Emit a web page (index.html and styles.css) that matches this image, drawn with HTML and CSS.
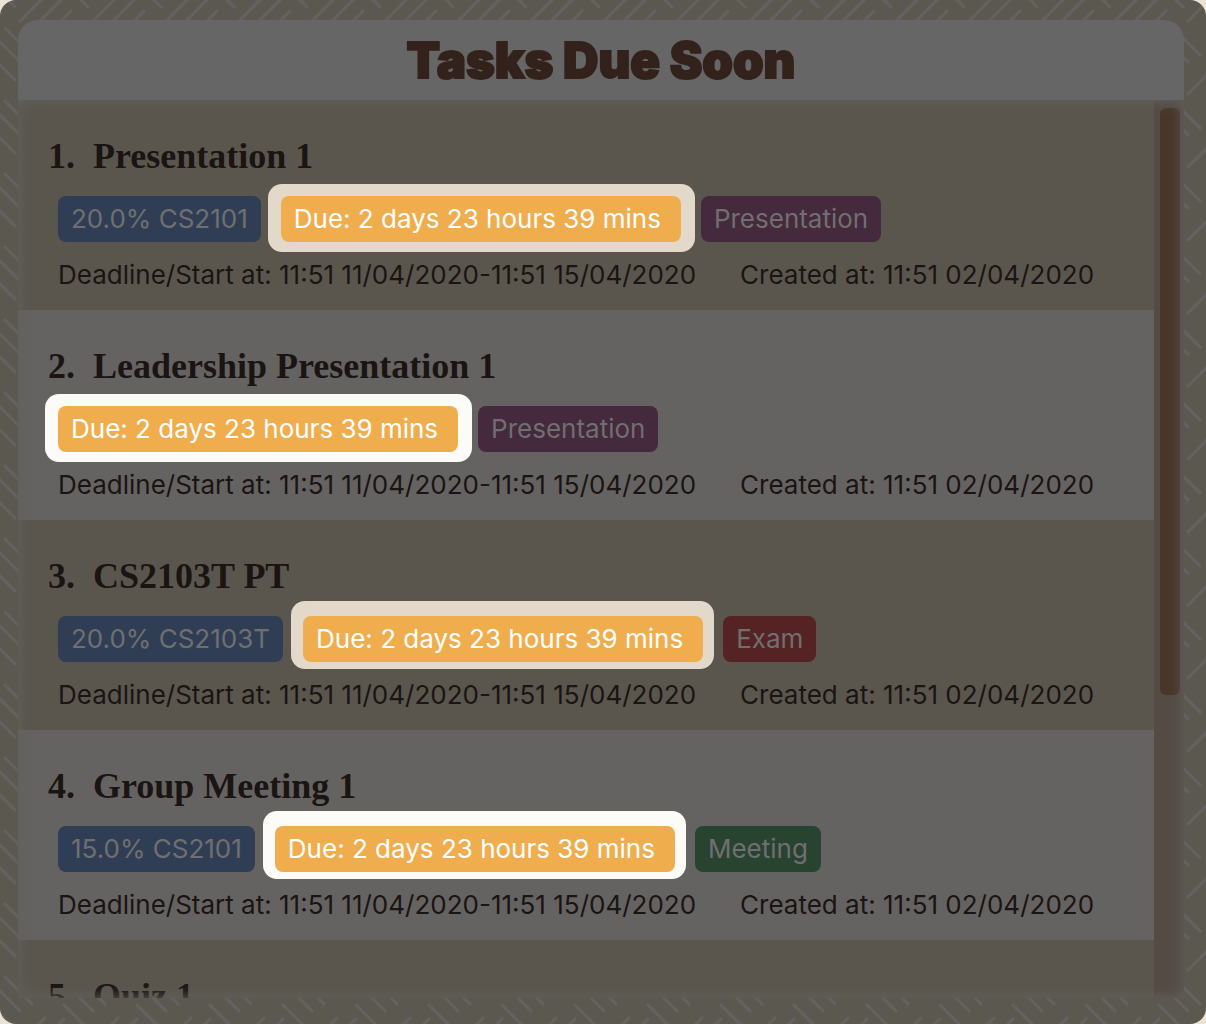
FILE: index.html
```html
<!DOCTYPE html>
<html lang="en">
<head>
<meta charset="utf-8">
<title>Tasks Due Soon</title>
<link rel="stylesheet" href="styles.css">
</head>
<body>
<main class="frame">
  <section class="panel">
    <h1 class="panel-title">Tasks Due Soon</h1>
    <div class="viewport">
      <ol class="tasks">
        <li class="task">
          <h2 class="name"><span>1.</span><span>Presentation 1</span></h2>
          <div class="tags"><span class="tag module">20.0% CS2101</span><span class="tag due">Due: 2 days 23 hours 39 mins</span><span class="tag presentation">Presentation</span></div>
          <p class="dates"><span>Deadline/Start at: 11:51 11/04/2020-11:51 15/04/2020</span><span>Created at: 11:51 02/04/2020</span></p>
        </li>
        <li class="task">
          <h2 class="name"><span>2.</span><span>Leadership Presentation 1</span></h2>
          <div class="tags"><span class="tag due">Due: 2 days 23 hours 39 mins</span><span class="tag presentation">Presentation</span></div>
          <p class="dates"><span>Deadline/Start at: 11:51 11/04/2020-11:51 15/04/2020</span><span>Created at: 11:51 02/04/2020</span></p>
        </li>
        <li class="task">
          <h2 class="name"><span>3.</span><span>CS2103T PT</span></h2>
          <div class="tags"><span class="tag module">20.0% CS2103T</span><span class="tag due raised">Due: 2 days 23 hours 39 mins</span><span class="tag exam">Exam</span></div>
          <p class="dates"><span>Deadline/Start at: 11:51 11/04/2020-11:51 15/04/2020</span><span>Created at: 11:51 02/04/2020</span></p>
        </li>
        <li class="task">
          <h2 class="name"><span>4.</span><span>Group Meeting 1</span></h2>
          <div class="tags"><span class="tag module">15.0% CS2101</span><span class="tag due raised">Due: 2 days 23 hours 39 mins</span><span class="tag meeting">Meeting</span></div>
          <p class="dates"><span>Deadline/Start at: 11:51 11/04/2020-11:51 15/04/2020</span><span>Created at: 11:51 02/04/2020</span></p>
        </li>
        <li class="task">
          <h2 class="name"><span>5.</span><span>Quiz 1</span></h2>
        </li>
      </ol>
      <div class="track"><div class="thumb"></div></div>
    </div>
  </section>
</main>
</body>
</html>
```
FILE: styles.css
```css
* { box-sizing: border-box; }

body {
  margin: 0;
  background: #ebe3d6;
  font-family: Inter, "Liberation Sans", sans-serif;
}

.frame {
  height: 100vh;
  padding: 20px 22px 26px 18px;
  border-radius: 16px;
  background: #5b5850 url("data:image/svg+xml,%3Csvg xmlns='http://www.w3.org/2000/svg' width='73' height='73'%3E%3Cdefs%3E%3Cpath id='p' d='M20 21L45 -4M40 21L64 -3M62 20L71 11M5 28L32 55M-8 34L20 62M-9 -17L15 7'/%3E%3C/defs%3E%3Cg stroke='%23636260' stroke-width='3' stroke-linecap='round'%3E%3Cuse href='%23p'/%3E%3Cuse href='%23p' x='73'/%3E%3Cuse href='%23p' x='-73'/%3E%3Cuse href='%23p' y='73'/%3E%3Cuse href='%23p' y='-73'/%3E%3Cuse href='%23p' x='73' y='73'/%3E%3C/g%3E%3C/svg%3E");
}

.panel {
  display: flex;
  flex-direction: column;
  height: 100%;
  border-radius: 20px 20px 0 0;
  overflow: hidden;
}

.panel-title {
  flex: none;
  margin: 0;
  height: 80px;
  background: #666;
  color: #33221b;
  font: 900 49px/82px Inter, "Liberation Sans", sans-serif;
  -webkit-text-stroke: 2px #33221b;
  text-align: center;
}

.viewport {
  position: relative;
  display: flex;
  flex: 1;
  min-height: 0;
}

/* soft inner edge over the scrolling area */
.viewport::after {
  content: "";
  position: absolute;
  inset: 0;
  box-shadow: inset 0 0 14px 1px #62615d;
  pointer-events: none;
}

.tasks {
  flex: 1;
  min-width: 0;
  margin: 0;
  padding: 0;
  list-style: none;
  overflow: hidden;
}

.task {
  height: 210px;
  padding: 32px 30px 0;
  background: #656361;
}

.task:nth-child(odd) { background: #5a564e; }

.name {
  display: flex;
  gap: 18px;
  margin: 0;
  color: #1a1412;
  font: bold 36px/48px "Liberation Serif", serif;
  white-space: nowrap;
}

.tags {
  display: flex;
  gap: 20px;
  margin: 16px 0 0 10px;
}

.tag {
  padding: 0 13px;
  border-radius: 8px;
  color: #706f70;
  font-size: 26px;
  line-height: 46px;
  white-space: nowrap;
}

.module { background: #303e55; }
.presentation { background: #45293c; }
.exam { background: #562324; }
.meeting { background: #284330; }

.due {
  position: relative;
  z-index: 0;
  padding-right: 20px;
  color: #fff;
}

/* bright ring, with the badge's own colour over it */
.due::before,
.due::after {
  content: "";
  position: absolute;
  z-index: -1;
}

.due::before {
  inset: -12px -14px -10px -13px;
  border-radius: 14px;
  background: #fcfbf7;
}

.due.raised::before { inset: -15px -11px -7px -12px; }

.due::after {
  inset: 0;
  border-radius: 8px;
  background: #f0ad4e;
}

.task:nth-child(odd) .due::before { background: #e2d9ca; }

.dates {
  display: flex;
  gap: 44px;
  margin: 14px 0 0 10px;
  color: #1a1412;
  font-size: 26px;
  line-height: 38px;
  white-space: nowrap;
}

.track {
  flex: none;
  width: 30px;
  padding: 8px 4px 0 6px;
  background: #544b45;
}

.thumb {
  height: 66%;
  border-radius: 6px;
  background: #48362a;
}
```
